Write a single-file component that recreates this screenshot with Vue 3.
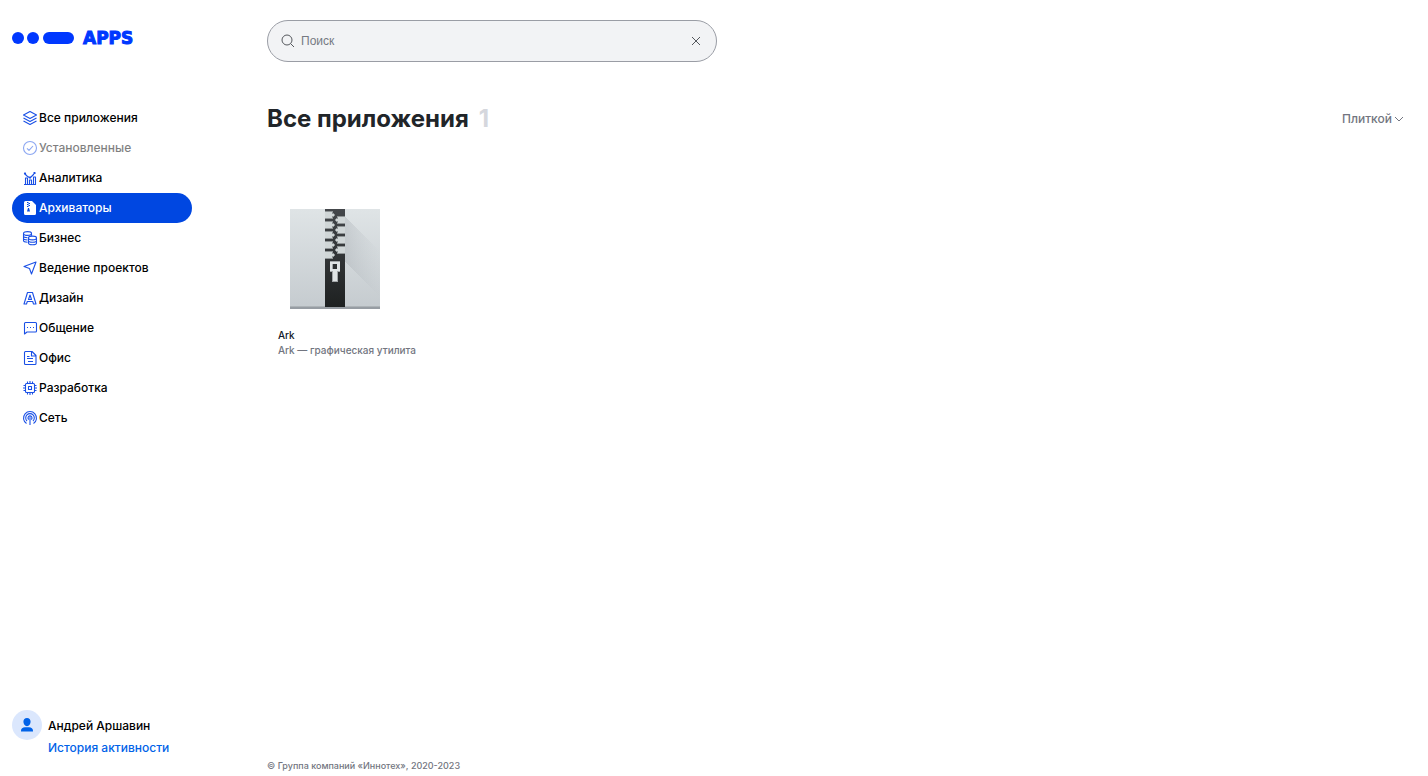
<template>
  <div class="page">
    <aside class="sidebar">
      <a href="#" class="logo" aria-label="Apps">
        <svg class="logo__mark" width="62" height="12" viewBox="0 0 62 12">
          <circle cx="6" cy="6" r="6" />
          <circle cx="21" cy="6" r="6" />
          <rect x="31" width="31" height="12" rx="6" />
        </svg>
        <span class="logo__text">APPS</span>
      </a>

      <nav class="menu">
        <a
          v-for="item in categories"
          :key="item.title"
          href="#"
          :class="[
            'menu__item',
            { 'menu__item--active': item.title === active, 'menu__item--disabled': item.disabled }
          ]"
          @click.prevent="select(item)"
        >
          <svg :class="['menu__icon', { 'menu__icon--solid': item.solid }]" width="16" height="16" viewBox="0 0 16 16">
            <path :d="item.icon" fill-rule="evenodd" />
          </svg>
          <span>{{ item.title }}</span>
        </a>
      </nav>

      <div class="user">
        <span class="user__avatar">
          <svg width="14" height="14" viewBox="0 0 14 14">
            <path d="M7 0c2.200 0 3.600 1.600 3.600 3.800S9.200 8.200 7 8.200 3.400 6 3.400 3.800 4.800 0 7 0zM1 13.500v-.8C1 10.500 2.700 9.300 5 9.300h4c2.300 0 4 1.200 4 3.400v.8z" />
          </svg>
        </span>
        <div class="user__info">
          <span class="user__name">Андрей Аршавин</span>
          <a href="#" class="user__link">История активности</a>
        </div>
      </div>
    </aside>

    <main class="content">
      <form class="search" role="search" @submit.prevent>
        <svg class="search__icon" width="14" height="14" viewBox="0 0 14 14">
          <circle cx="6" cy="6" r="5" />
          <path d="M9.600 9.600 13 13" />
        </svg>
        <input v-model="query" class="search__input" type="text" placeholder="Поиск" aria-label="Поиск" />
        <button class="search__clear" type="button" aria-label="Очистить" @click="query = ''">
          <svg width="10" height="10" viewBox="0 0 10 10">
            <path d="m1 1 8 8M9 1 1 9" />
          </svg>
        </button>
      </form>

      <header class="heading">
        <h1 class="heading__title">Все приложения</h1>
        <span class="heading__count">{{ apps.length }}</span>
        <div class="view">
          <select v-model="view" class="view__select" aria-label="Вид списка">
            <option value="tile">Плиткой</option>
            <option value="list">Списком</option>
          </select>
          <svg class="view__arrow" width="10" height="6" viewBox="0 0 10 6">
            <path d="m1 1 4 4 4-4" />
          </svg>
        </div>
      </header>

      <section class="apps">
        <a v-for="app in apps" :key="app.name" href="#" class="app">
          <svg class="app__icon" width="90" height="100" viewBox="0 0 90 100" shape-rendering="crispEdges">
            <defs>
              <linearGradient id="paper" x1="0" y1="0" x2="0" y2="1">
                <stop offset="0" stop-color="#dfe4e6" />
                <stop offset="1" stop-color="#c5cbcf" />
              </linearGradient>
              <linearGradient id="tape" x1="0" y1="0" x2="0" y2="1">
                <stop offset="0" stop-color="#44474b" />
                <stop offset="1" stop-color="#1e2121" />
              </linearGradient>
              <linearGradient id="shade" x1="0" y1="0" x2="1" y2="0">
                <stop offset="0" stop-color="#8b9198" stop-opacity="0.25" />
                <stop offset="1" stop-color="#aab0b6" stop-opacity="0" />
              </linearGradient>
            </defs>
            <rect width="90" height="100" fill="url(#paper)" />
            <path d="M55 8 90 43v45L55 53z" fill="url(#shade)" />
            <rect y="97" width="90" height="1" fill="#adb3b7" />
            <rect y="98" width="90" height="2" fill="#979da3" />
            <rect x="35" width="20" height="98" fill="url(#tape)" />
            <g v-for="y in leftTeeth" :key="`l${y}`" :transform="`translate(35 ${y})`">
              <path d="M0 0h8v2h1v1h1v2H9v1H8v2H0z" fill="#8f9496" />
              <path d="M0 1h7v2h2v2H7v2H0z" fill="#d0d6d7" />
            </g>
            <g v-for="y in rightTeeth" :key="`r${y}`" :transform="`translate(45 ${y})`">
              <path d="M10 0H2v2H1v1H0v2h1v1h1v2h8z" fill="#8f9496" />
              <path d="M10 1H3v2H1v2h2v2h7z" fill="#d0d6d7" />
            </g>
            <path d="M40 52h10v11h-2v10h-6V63h-2zm3 3v5h4v-5z" fill="#a3a7a9" fill-rule="evenodd" />
            <path d="M40 53h10v9h-3v10h-4V62h-3zm2 2v5h5v-5z" fill="#e0e4e5" fill-rule="evenodd" />
          </svg>
          <span class="app__name">{{ app.name }}</span>
          <span class="app__text">{{ app.text }}</span>
        </a>
      </section>

      <footer class="footer">© Группа компаний «Иннотех», 2020-2023</footer>
    </main>
  </div>
</template>

<script setup>
import { ref } from 'vue'

const query = ref('')
const view = ref('tile')
const active = ref('Архиваторы')

const apps = [{ name: 'Ark', text: 'Ark — графическая утилита' }]

// Zipper teeth offsets, left and right rows interleave
const leftTeeth = [2, 12, 22, 32, 42]
const rightTeeth = [7, 17, 27, 37]

const categories = [
  {
    title: 'Все приложения',
    icon: 'M8 1.500 14.500 5 8 8.500 1.500 5zM1.500 8 8 11.500 14.500 8M1.500 11 8 14.500 14.500 11'
  },
  {
    title: 'Установленные',
    disabled: true,
    icon: 'M8 1.500a6.500 6.500 0 1 1 0 13 6.500 6.500 0 0 1 0-13zM5 8.300l2 2L11 6'
  },
  {
    title: 'Аналитика',
    icon: 'M2 14.500h12M3.500 14.500V8h2v6.500M7.500 14.500V10h2v4.500M11.500 14.500V7h2v7.500M3 4l2 2 3 2 4-4M2.500 3h1v1h-1zM7.500 7h1v1h-1zM12 2.500h1v1h-1z'
  },
  {
    title: 'Архиваторы',
    solid: true,
    icon: 'M3.500 1H10l4 4v8.500a1.500 1.500 0 0 1-1.500 1.500h-9A1.500 1.500 0 0 1 2 13.500v-11A1.500 1.500 0 0 1 3.500 1zM5 2v1h1.500V2zM6.500 3v1H8V3zM5 4v1h1.500V4zM6.500 5v1H8V5zM5 6v1h1.500V6zM6 8l-1 3.500h3L7 8z'
  },
  {
    title: 'Бизнес',
    icon: 'M1.500 3.500c0-2.500 8-2.500 8 0s-8 2.500-8 0v7c0 1 2 1.700 4 1.800M9.500 3.500v2M1.500 6c0 1 2 1.700 4 1.700M1.500 8.300c0 1 2 1.700 4 1.700M6.500 8c0-2.500 8-2.500 8 0s-8 2.500-8 0v5c0 2.300 8 2.300 8 0V8M6.500 10.500c0 2.300 8 2.300 8 0'
  },
  {
    title: 'Ведение проектов',
    icon: 'M14 2 9.500 14 7.500 8.500 2 6.500z'
  },
  {
    title: 'Дизайн',
    icon: 'M2 14 5.500 2.500h5L14 14h-2.500L10.700 11.500H5.300L4.500 14zM6.500 9.500h3L8 5z'
  },
  {
    title: 'Общение',
    icon: 'M2.500 14V3.500a1 1 0 0 1 1-1h10a1 1 0 0 1 1 1V11a1 1 0 0 1-1 1H5zM5 7.500h1M8 7.500h1M11 7.500h1'
  },
  {
    title: 'Офис',
    icon: 'M3.500 1.500H10L14 5.500v8a1 1 0 0 1-1 1H3.500a1 1 0 0 1-1-1v-11a1 1 0 0 1 1-1zM9.500 1.500v4.500H14M5 6.500h2.500M5 8.500h6M6 11.500h5'
  },
  {
    title: 'Разработка',
    icon: 'M4.500 3.500h7a1 1 0 0 1 1 1v7a1 1 0 0 1-1 1h-7a1 1 0 0 1-1-1v-7a1 1 0 0 1 1-1zM6.500 6.500h3v3h-3zM5.500 3V1.500M8 3V1M10.500 3V1.500M5.500 13v1.500M8 13v2M10.500 13v1.500M3 5.500H1.500M3 8H1M3 10.500H1.500M13 5.500h1.500M13 8h2M13 10.500h1.500'
  },
  {
    title: 'Сеть',
    icon: 'M4.500 13.500a6.500 6.500 0 1 1 7 0M5 11a4.300 4.300 0 1 1 6 0M6.800 9.500a2 2 0 1 1 2.400 0M8 8v7M7.500 7.500h1'
  }
]

const select = (item) => {
  if (!item.disabled) {
    active.value = item.title
  }
}
</script>

<style scoped>
.page {
  display: flex;
  min-height: 100vh;
  font-family: Inter, 'Liberation Sans', sans-serif;
  font-size: 12px;
  font-weight: 500;
  line-height: 18px;
  color: #000;
  background: #fff;
}

a {
  color: inherit;
  text-decoration: none;
}

/* Sidebar */
.sidebar {
  display: flex;
  flex-direction: column;
  flex: 0 0 180px;
  padding: 28px 0 19px 12px;
}

.logo {
  display: flex;
  align-items: center;
  gap: 9px;
  height: 20px;
  color: #0038ff;
}

.logo__mark {
  fill: currentColor;
}

.logo__text {
  font-family: 'DejaVu Sans', sans-serif;
  font-size: 17px;
  font-weight: 700;
  line-height: 20px;
  -webkit-text-stroke: 1px currentColor;
}

.menu {
  display: flex;
  flex-direction: column;
  margin-top: 55px;
}

.menu__item {
  display: flex;
  align-items: center;
  gap: 1px;
  height: 30px;
  padding: 0 10px;
  border-radius: 15px;
}

.menu__item--active {
  color: #fff;
  background: #0047e1;
}

.menu__item--disabled {
  opacity: 0.5;
  cursor: default;
}

.menu__icon {
  fill: none;
  stroke: #1a50e6;
  stroke-width: 1.1;
  stroke-linejoin: round;
}

.menu__icon--solid {
  fill: #fff;
  stroke: none;
}

.user {
  display: flex;
  gap: 6px;
  margin-top: auto;
}

.user__avatar {
  display: flex;
  align-items: center;
  justify-content: center;
  width: 30px;
  height: 30px;
  border-radius: 50%;
  background: #dbe7fd;
}

.user__avatar svg {
  fill: #0062e8;
}

.user__info {
  display: flex;
  flex-direction: column;
  gap: 4px;
  padding-top: 7px;
  white-space: nowrap;
}

.user__link {
  color: #0062e8;
}

/* Content */
.content {
  display: flex;
  flex: 1;
  flex-direction: column;
  min-width: 0;
  padding: 20px 24px 1px 75px;
}

.search {
  display: flex;
  align-items: center;
  box-sizing: border-box;
  width: 100%;
  max-width: 450px;
  height: 42px;
  padding: 0 15px 0 13px;
  border: 1px solid #9a9da5;
  border-radius: 21px;
  background: #f2f3f5;
}

.search svg {
  fill: none;
  stroke: #55585d;
}

.search__input {
  flex: 1;
  min-width: 0;
  padding: 0 6px;
  border: none;
  outline: none;
  font-family: 'Liberation Sans', Arial, sans-serif;
  font-size: 12px;
  background: transparent;
}

.search__input::placeholder {
  color: #757982;
}

.search__clear {
  display: flex;
  padding: 0;
  border: none;
  background: none;
  cursor: pointer;
}

.heading {
  display: flex;
  align-items: center;
  height: 32px;
  margin-top: 41px;
}

.heading__title,
.heading__count {
  margin: 0;
  font-size: 24px;
  font-weight: 700;
  line-height: 32px;
}

.heading__title {
  color: #212529;
}

.heading__count {
  margin-left: 10px;
  color: #d5d7dd;
}

.view {
  display: flex;
  align-items: center;
  gap: 2px;
  margin-left: auto;
}

.view__select {
  padding: 0;
  border: none;
  appearance: none;
  font: inherit;
  color: #727580;
  background: none;
  field-sizing: content;
}

.view__arrow {
  fill: none;
  stroke: #727580;
  pointer-events: none;
}

/* App tiles */
.apps {
  display: flex;
  flex-wrap: wrap;
  margin-top: 74px;
}

.app {
  display: flex;
  flex-direction: column;
  padding: 0 11px;
  font-size: 10px;
  line-height: 15px;
}

.app__icon {
  margin: 0 12px 19px;
}

.app__name {
  color: #101828;
}

.app__text {
  color: #727580;
}

.footer {
  margin-top: auto;
  font-size: 9px;
  color: #727580;
}
</style>

<style>
body {
  margin: 0;
}
</style>
